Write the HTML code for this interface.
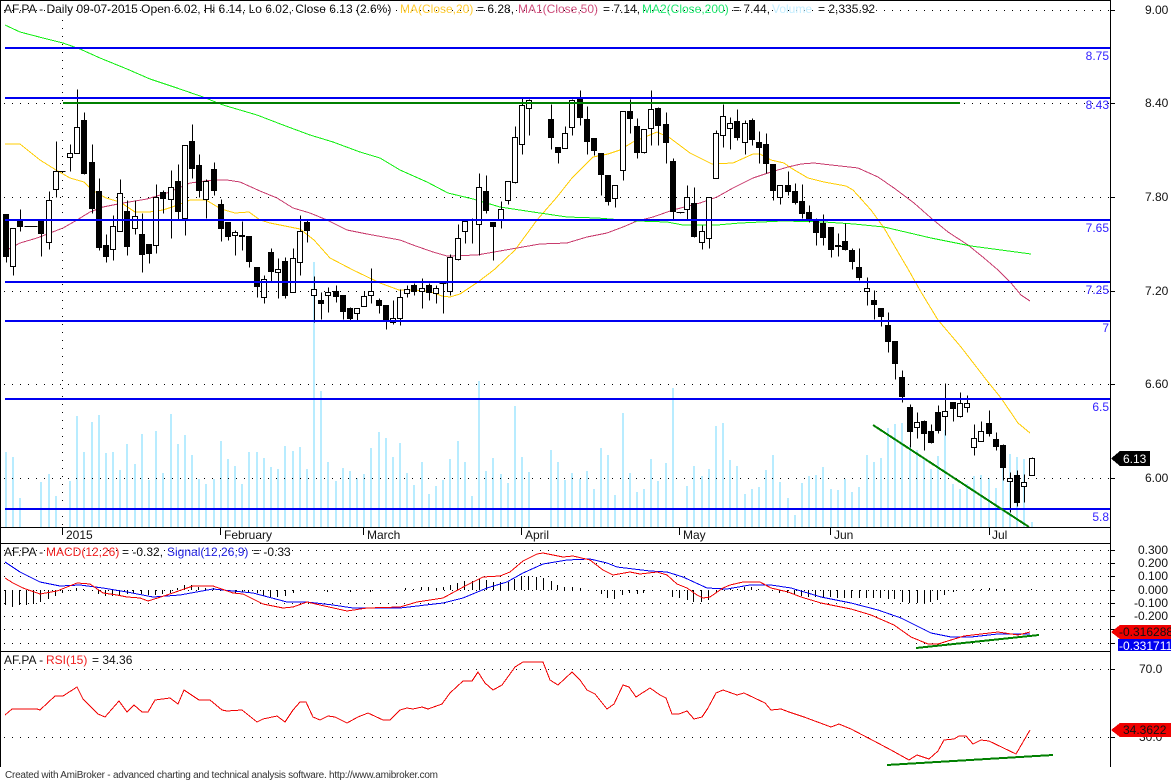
<!DOCTYPE html>
<html><head><meta charset="utf-8"><title>AF.PA</title>
<style>
html,body{margin:0;padding:0;background:#fff;width:1171px;height:781px;overflow:hidden}
svg{display:block}
text{font-family:"Liberation Sans",Arial,sans-serif;font-size:12px;fill:#111;stroke:currentColor;stroke-width:0}
.nl{fill:#3322ff}
path,polyline,rect{shape-rendering:crispEdges}
polyline{fill:none}
</style></head><body>
<svg width="1171" height="781" viewBox="0 0 1171 781" xmlns="http://www.w3.org/2000/svg">
<!-- volume -->
<path fill="none" stroke="#b8ecff" stroke-width="2" d="M6 527V452M13 527V457M20 527V498M41 527V482M49 527V474M56 527V496M70 527V481M77 527V416M84 527V452M92 527V422M99 527V415M106 527V453M113 527V452M120 527V470M127 527V444M135 527V464M142 527V434M149 527V480M156 527V431M163 527V473M171 527V414M178 527V444M185 527V435M192 527V455M199 527V479M206 527V484M214 527V479M221 527V441M228 527V459M235 527V466M242 527V484M249 527V452M257 527V452M264 527V458M271 527V467M278 527V469M285 527V446M293 527V451M300 527V447M307 527V469M314 527V262M321 527V391M328 527V462M336 527V481M343 527V468M350 527V471M357 527V478M364 527V474M371 527V448M379 527V432M386 527V438M393 527V457M400 527V443M407 527V473M414 527V485M422 527V462M429 527V494M436 527V486M443 527V480M450 527V459M458 527V441M465 527V462M472 527V496M479 527V381M486 527V471M493 527V458M501 527V474M508 527V483M515 527V406M522 527V457M529 527V472M551 527V450M558 527V462M565 527V480M572 527V473M580 527V479M587 527V471M594 527V489M601 527V448M608 527V455M615 527V495M623 527V413M630 527V473M637 527V492M644 527V489M651 527V459M658 527V481M666 527V463M673 527V388M687 527V486M694 527V466M702 527V476M709 527V469M716 527V426M723 527V423M730 527V460M737 527V466M745 527V494M752 527V489M759 527V487M766 527V470M773 527V455M780 527V482M788 527V498M795 527V515M802 527V483M809 527V476M816 527V475M823 527V467M831 527V489M838 527V490M845 527V479M852 527V492M859 527V487M867 527V455M874 527V462M881 527V458M888 527V428M895 527V424M902 527V423M910 527V445M917 527V450M924 527V460M931 527V469M938 527V456M945 527V430M953 527V484M960 527V489M967 527V484M974 527V476M981 527V475M989 527V478M996 527V488M1003 527V454M1010 527V454M1017 527V457M1024 527V459M1032 527V522"/>
<!-- dotted grid -->
<path fill="none" stroke="#000" stroke-width="1" stroke-dasharray="1 7" d="M4 10.5H1110M4 103.5H1110M4 197.5H1110M4 291.5H1110M4 384.5H1110M4 478.5H1110M4 550.5H1110M4 563.5H1110M4 576.5H1110M4 590.5H1110M4 603.5H1110M4 616.5H1110M4 629.5H1110M4 643.5H1110M4 669.5H1110M4 737.5H1110M62.5 20V527"/>
<!-- MAs -->
<polyline stroke="#ffcc00" points="5,144 20,144 40,160 56,170 70,178 84,182 92,190 106,198 120,202 135,212 149,212 163,210 178,205 190,200 206,200 221,209 235,213 249,212 260,220 270,223 285,226 300,229 314,240 330,258 353,270 380,283 399,290 414,290 428,291 442,296 450,297 460,294 478,282 495,269 515,250 537,220 557,197 572,178 593,157 608,154 620,150 633,142 657,132 670,138 690,153 712,164 733,163 753,154 760,154 771,160 784,163 791,168 808,178 824,182 846,186 853,190 871,210 884,228 898,252 908,269 921,292 938,320 961,347 988,382 1001,398 1018,423 1030,433"/>
<polyline stroke="#c83c6e" points="7,250 20,243 37,238 50,233 63,228 77,220 90,212 103,207 123,203 147,199 167,193 190,183 213,180 227,180 240,182 260,191 277,198 293,208 310,213 327,220 347,230 367,234 400,240 413,245 433,252 447,256 477,255 517,248 540,244 567,243 587,237 607,233 623,227 637,221 653,217 673,210 700,203 717,197 733,188 753,178 771,172 788,167 801,164 814,163 831,165 858,168 878,177 894,188 914,203 931,218 948,232 968,245 984,258 998,270 1011,283 1021,295 1030,301"/>
<polyline stroke="#10ee10" points="5,25 20,32 43,38 63,43 80,49 100,58 127,69 150,79 177,88 203,97 223,105 257,115 283,125 310,135 333,142 360,152 380,158 400,170 427,182 448,193 473,199 500,207 533,212 567,217 597,218 637,221 667,222 683,225 717,225 740,223 783,221 824,222 854,224 884,227 931,238 971,246 1031,254"/>
<!-- candle wicks -->
<path fill="none" stroke="#000" stroke-width="1" transform="translate(.5 .5)" d="M6 214V262M13 228V275M20 209V231M24 226H37M41 221V256M49 191V249M56 141V197M56 171H65M70 144V171M77 89V153M84 112V174M92 144V213M99 178V250M106 234V262M113 215V260M120 179V231M127 200V255M135 200V234M142 213V272M149 244V263M156 184V253M163 190V213M171 170V238M178 164V220M185 145V235M192 124V178M199 154V197M206 179V218M214 162V195M221 199V241M228 222V240M235 230V255M242 221V250M249 236V267M257 267V297M264 275V303M271 248V282M278 258V298M285 257V298M293 248V292M300 215V275M307 220V242M314 276V322M321 292V319M328 287V312M336 285V302M343 295V319M350 307V320M357 308V320M364 291V306M371 268V303M379 298V313M386 305V329M393 300V324M400 289V325M407 285V297M414 283V295M422 278V308M429 283V300M436 285V303M443 283V313M439 283H446M450 254V295M458 224V260M465 220V243M472 218V243M468 220H476M479 173V255M486 175V213M493 222V260M501 201V228M508 181V204M515 126V183M522 98V154M529 99V135M551 104V149M558 147V163M565 126V148M572 99V135M580 90V125M587 106V154M594 138V155M601 153V195M608 175V205M615 185V207M623 111V180M630 99V133M637 118V158M644 129V153M651 90V145M658 107V145M666 112V163M673 158V220M680 212V213M676 212H684M687 185V220M694 187V237M702 225V249M709 197V248M716 130V178M723 104V147M730 117V149M737 109V140M745 120V154M752 118V145M759 131V163M766 133V173M773 164V200M780 185V204M788 171V195M795 183V204M802 184V218M809 205V222M816 218V245M823 214V245M831 227V257M838 233V256M835 246H842M845 223V250M852 248V269M859 248V280M867 277V305M874 290V319M881 308V326M888 312V352M895 341V379M902 370V402M910 404V447M917 412V438M924 420V450M931 424V443M938 405V433M945 383V435M953 402V421M960 392V417M967 395V412M974 424V455M981 421V441M989 410V436M996 432V450M1003 444V480M1010 472V512M1017 470V506M1024 474V502M1032 457V475"/>
<!-- black bodies -->
<path fill="none" stroke="#000" stroke-width="6" d="M6 214V257M20 221V227M41 221V234M84 120V174M92 162V209M99 191V248M106 245V257M127 211V247M142 234V255M149 244V254M163 192V199M178 181V212M192 141V169M199 165V191M214 169V191M221 204V229M228 222V237M242 235V237M249 236V262M257 267V287M271 252V272M285 261V296M307 222V231M321 300V304M336 291V297M343 295V312M350 308V319M379 300V306M386 305V320M414 285V292M429 285V293M493 222V227M486 191V211M551 119V138M558 147V153M580 98V118M587 119V142M594 138V151M601 153V175M608 175V202M630 111V119M637 126V153M658 108V126M666 124V143M673 161V212M694 203V237M737 121V138M752 120V140M759 142V148M766 144V164M773 164V191M788 185V192M795 191V203M802 201V214M809 212V220M816 220V233M823 223V238M831 227V250M838 245V247M845 241V250M852 250V262M859 267V278M874 300V305M881 308V317M888 325V342M895 341V364M902 377V397M910 407V432M924 421V434M931 431V443M938 412V431M953 402V409M989 423V434M996 439V447M1003 445V468M1017 475V503"/>
<!-- white bodies -->
<g fill="#fff" stroke="#000" stroke-width="1">
<rect x="10.5" y="228.5" width="5" height="38"/><rect x="46.5" y="200.5" width="5" height="42"/><rect x="53.5" y="171.5" width="5" height="18"/><rect x="67.5" y="153.5" width="5" height="4"/><rect x="74.5" y="127.5" width="5" height="26"/><rect x="110.5" y="226.5" width="5" height="23"/><rect x="117.5" y="193.5" width="5" height="38"/><rect x="132.5" y="216.5" width="5" height="12"/><rect x="153.5" y="197.5" width="5" height="48"/><rect x="168.5" y="187.5" width="5" height="12"/><rect x="182.5" y="145.5" width="5" height="73"/><rect x="203.5" y="181.5" width="5" height="18"/><rect x="232.5" y="232.5" width="5" height="3"/><rect x="261.5" y="279.5" width="5" height="18"/><rect x="275.5" y="269.5" width="5" height="3"/><rect x="290.5" y="258.5" width="5" height="34"/><rect x="297.5" y="231.5" width="5" height="31"/><rect x="311.5" y="289.5" width="5" height="6"/><rect x="325.5" y="292.5" width="5" height="3"/><rect x="354.5" y="308.5" width="5" height="5"/><rect x="361.5" y="296.5" width="5" height="10"/><rect x="368.5" y="291.5" width="5" height="4"/><rect x="390.5" y="318.5" width="5" height="4"/><rect x="397.5" y="297.5" width="5" height="21"/><rect x="404.5" y="289.5" width="5" height="4"/><rect x="419.5" y="288.5" width="5" height="3"/><rect x="433.5" y="288.5" width="5" height="5"/><rect x="447.5" y="257.5" width="5" height="34"/><rect x="455.5" y="238.5" width="5" height="21"/><rect x="462.5" y="221.5" width="5" height="10"/><rect x="476.5" y="187.5" width="5" height="37"/><rect x="498.5" y="209.5" width="5" height="11"/><rect x="505.5" y="181.5" width="5" height="19"/><rect x="512.5" y="137.5" width="5" height="45"/><rect x="519.5" y="105.5" width="5" height="39"/><rect x="526.5" y="100.5" width="5" height="8"/><rect x="562.5" y="133.5" width="5" height="15"/><rect x="569.5" y="100.5" width="5" height="27"/><rect x="612.5" y="185.5" width="5" height="13"/><rect x="620.5" y="111.5" width="5" height="59"/><rect x="641.5" y="129.5" width="5" height="23"/><rect x="648.5" y="109.5" width="5" height="19"/><rect x="684.5" y="197.5" width="5" height="12"/><rect x="699.5" y="231.5" width="5" height="11"/><rect x="706.5" y="197.5" width="5" height="41"/><rect x="713.5" y="133.5" width="5" height="45"/><rect x="720.5" y="116.5" width="5" height="19"/><rect x="727.5" y="123.5" width="5" height="5"/><rect x="742.5" y="123.5" width="5" height="19"/><rect x="777.5" y="185.5" width="5" height="12"/><rect x="864.5" y="288.5" width="5" height="3"/><rect x="914.5" y="422.5" width="5" height="5"/><rect x="942.5" y="411.5" width="5" height="5"/><rect x="957.5" y="403.5" width="5" height="13"/><rect x="964.5" y="403.5" width="5" height="4"/><rect x="971.5" y="438.5" width="5" height="9"/><rect x="978.5" y="431.5" width="5" height="10"/><rect x="1007.5" y="478.5" width="5" height="3"/><rect x="1021.5" y="482.5" width="5" height="4"/><rect x="1029.5" y="458.5" width="5" height="17"/>
</g>
<!-- horizontal studies -->
<path fill="none" stroke="#0000f0" stroke-width="2" d="M5 48H1110M5 98H1110M5 220H1110M5 282H1110M5 321H1110M5 399H1110M5 509H1110"/>
<path fill="none" stroke="#008000" stroke-width="2" d="M63 103H960"/>
<path fill="none" stroke="#008000" stroke-width="2" d="M873 425L1029 527"/>
<!-- MACD -->
<path fill="none" stroke="#000" stroke-width="1" transform="translate(.5 0)" d="M5 590V605M12 590V607M19 590V605M26 590V605M33 590V604M40 590V602M48 590V599M55 590V596M62 590V593M70 590V591M76 590V588M83 590V589M98 590V594M105 590V596M112 590V596M119 590V595M127 590V594M133 590V593M141 590V594M148 590V595M155 590V595M162 590V594M170 590V593M177 590V588M184 590V585M191 590V585M198 590V587M205 590V588M213 590V588M228 590V592M235 590V593M242 590V592M248 590V593M257 590V593M263 590V596M270 590V597M277 590V597M285 590V596M293 590V593M327 590V592M350 590V592M370 590V592M405 590V588M413 590V589M421 590V587M428 590V587M436 590V588M443 590V587M450 590V585M457 590V583M464 590V581M472 590V581M479 590V579M486 590V580M493 590V582M500 590V582M508 590V582M514 590V579M521 590V576M528 590V576M536 590V577M543 590V578M551 590V581M557 590V585M564 590V587M572 590V587M580 590V588M601 590V594M607 590V598M614 590V599M622 590V595M629 590V593M637 590V594M643 590V593M672 590V597M679 590V598M687 590V600M693 590V602M701 590V602M708 590V600M716 590V593M722 590V588M730 590V588M737 590V589M744 590V587M751 590V587M758 590V589M779 590V593M787 590V593M794 590V595M801 590V596M808 590V597M815 590V597M823 590V597M830 590V597M837 590V598M844 590V598M851 590V598M859 590V598M866 590V598M873 590V598M880 590V598M888 590V599M894 590V599M902 590V602M909 590V603M917 590V603M924 590V603M930 590V602M937 590V600M944 590V595M953 590V592M973 590V589M981 590V589M989 590V588M996 590V589M1004 590V589M1031 590V589"/>
<polyline stroke="#0000f0" stroke-width="1" points="5,562 20,572 40,582 60,586 80,585 103,588 127,592 153,597 180,595 213,589 233,591 253,593 287,602 307,602 333,605 353,608 380,608 400,608 443,603 463,598 487,588 507,582 523,573 543,564 567,560 590,559 607,563 617,567 650,571 667,572 683,577 707,588 727,589 750,585 771,585 791,588 821,597 851,603 878,610 901,618 931,633 951,637 971,637 998,634 1030,634"/>
<polyline stroke="#f00000" stroke-width="1" points="5,578 13,583 23,588 40,594 57,591 67,587 77,583 90,584 103,593 117,595 127,597 140,598 148,601 167,595 187,588 193,586 213,586 233,593 243,594 263,604 283,608 293,607 307,602 320,605 347,611 367,608 400,607 417,602 443,598 467,585 483,577 500,576 510,572 523,561 537,554 543,553 563,557 573,556 590,560 603,570 613,575 630,572 640,574 657,572 667,575 677,584 687,588 697,595 703,598 710,597 723,588 730,585 743,582 760,582 771,588 788,592 801,597 821,603 851,609 871,615 894,625 911,637 928,644 938,644 964,636 998,632 1018,635 1030,632"/>
<path fill="none" stroke="#008000" stroke-width="2" d="M916 648L1039 635"/>
<!-- RSI -->
<polyline stroke="#f00000" points="5,715 12,709 37,709 40,710 55,696 63,696 77,687 83,699 98,714 105,717 119,701 127,712 134,705 142,712 148,712 155,700 170,698 178,704 184,690 199,700 210,700 222,710 227,711 242,710 257,722 263,719 277,716 285,722 293,710 300,702 306,702 313,717 320,720 328,716 335,717 347,723 358,717 368,713 383,720 390,720 400,710 407,708 413,709 422,707 428,709 442,704 450,693 463,681 472,681 478,672 485,683 493,690 502,685 515,667 523,662 543,662 550,680 558,685 572,672 580,680 587,690 595,694 607,709 614,704 623,685 629,687 636,697 650,688 660,695 666,698 672,714 679,714 687,711 694,719 702,717 708,708 716,693 723,690 737,695 744,693 765,703 771,710 781,709 789,712 804,717 831,727 839,724 851,729 874,741 891,750 909,760 917,755 929,759 938,751 944,740 954,739 959,736 966,736 973,744 981,740 989,741 1016,754 1030,730"/>
<path fill="none" stroke="#008000" stroke-width="2" d="M887 765L1053 755"/>
<!-- frame -->
<path fill="none" stroke="#000" stroke-width="1" d="M0.5 0V767M1110.5 0V767M0 0.5H1110M0 527.5H1110M0 543.5H1110M0 651.5H1110M62.5 527V535M220.5 527V535M363.5 527V535M521.5 527V535M679.5 527V535M830.5 527V535M989.5 527V535M1110 10.5H1115M1110 103.5H1115M1110 197.5H1115M1110 291.5H1115M1110 384.5H1115M1110 478.5H1115M1110 550.5H1115M1110 563.5H1115M1110 576.5H1115M1110 590.5H1115M1110 603.5H1115M1110 616.5H1115M1110 629.5H1115M1110 643.5H1115M1110 669.5H1115M1110 737.5H1115"/>
<!-- legend -->
<text x="4" y="13">AF.PA - Daily 09-07-2015 Open 6.02, Hi 6.14, Lo 6.02, Close 6.13 (2.6%)</text>
<text x="400" y="13" style="fill:#ffcc33">MA(Close,20)</text><text x="477" y="13">= 6.28,</text>
<text x="518" y="13" style="fill:#d0507e">MA1(Close,50)</text><text x="603" y="13">= 7.14,</text>
<text x="642" y="13" style="fill:#20e870">MA2(Close,200)</text><text x="733" y="13">= 7.44,</text>
<text x="772" y="13" style="fill:#c4eeff">Volume</text><text x="818" y="13">= 2,335.92</text>
<text x="4" y="556">AF.PA -</text><text x="46" y="556" style="fill:#f02020">MACD(12,26)</text><text x="122" y="556">= -0.32,</text><text x="167" y="556" style="fill:#2020e0">Signal(12,26,9)</text><text x="253" y="556">= -0.33</text>
<text x="4" y="664">AF.PA -</text><text x="46" y="664" style="fill:#f02020">RSI(15)</text><text x="92" y="664">= 34.36</text>
<!-- x labels -->
<text x="66" y="539">2015</text><text x="224" y="539">February</text><text x="367" y="539">March</text><text x="525" y="539">April</text><text x="683" y="539">May</text><text x="834" y="539">Jun</text><text x="992" y="539">Jul</text>
<!-- blue labels -->
<text class="nl" x="1109" y="60" text-anchor="end">8.75</text><text class="nl" x="1109" y="109" text-anchor="end">8.43</text><text class="nl" x="1109" y="232" text-anchor="end">7.65</text><text class="nl" x="1109" y="294" text-anchor="end">7.25</text><text class="nl" x="1109" y="332" text-anchor="end">7</text><text class="nl" x="1109" y="411" text-anchor="end">6.5</text><text class="nl" x="1109" y="521" text-anchor="end">5.8</text>
<!-- y axis -->
<text x="1145" y="14">9.00</text><text x="1145" y="107">8.40</text><text x="1145" y="201">7.80</text><text x="1145" y="295">7.20</text><text x="1145" y="388">6.60</text><text x="1145" y="482">6.00</text>
<g text-anchor="end"><text x="1168" y="554">0.300</text><text x="1168" y="567">0.200</text><text x="1168" y="580">0.100</text><text x="1168" y="594">0.000</text><text x="1168" y="607">-0.100</text><text x="1168" y="620">-0.200</text></g>
<text x="1139" y="673">70.0</text><text x="1139" y="741">30.0</text>
<!-- tags -->
<path d="M1111 458.5L1120 451H1150V466H1120Z" fill="#000"/><text x="1123" y="463" style="fill:#fff">6.13</text>
<path d="M1111 632L1120 625H1171V639H1120Z" fill="#f00000"/><text x="1119" y="636">-0.316288</text>
<rect x="1118" y="639" width="53" height="12" fill="#0000f0"/><text x="1119" y="650" style="fill:#fff">-0.331711</text>
<path d="M1111 730L1120 723H1171V737H1120Z" fill="#f00000"/><text x="1123" y="734">34.3622</text>
<!-- footer -->
<text x="5" y="778" textLength="433" lengthAdjust="spacing" style="font-size:10px;fill:#333">Created with AmiBroker - advanced charting and technical analysis software. http://www.amibroker.com</text>
</svg>
</body></html>
